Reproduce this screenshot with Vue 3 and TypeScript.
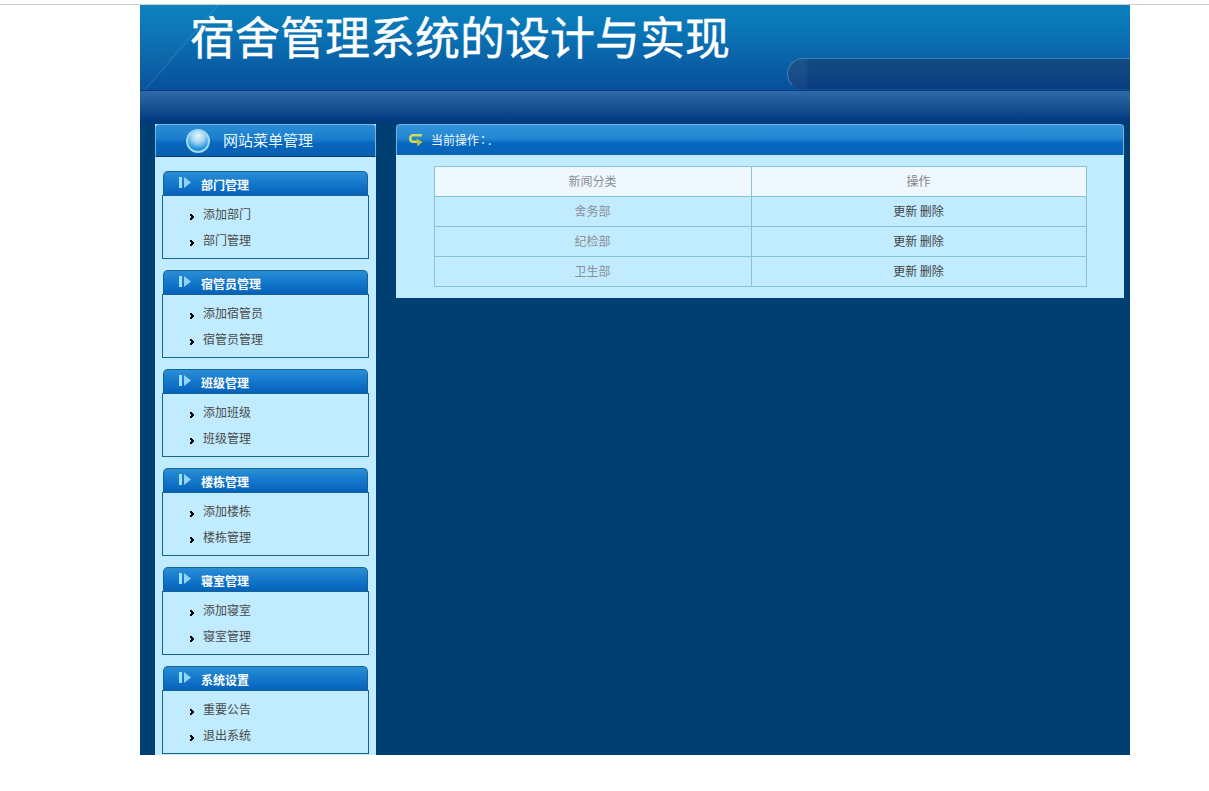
<script setup lang="ts">
interface Group { title: string; items: string[] }
const groups: Group[] = [
  { title: '部门管理', items: ['添加部门', '部门管理'] },
  { title: '宿管员管理', items: ['添加宿管员', '宿管员管理'] },
  { title: '班级管理', items: ['添加班级', '班级管理'] },
  { title: '楼栋管理', items: ['添加楼栋', '楼栋管理'] },
  { title: '寝室管理', items: ['添加寝室', '寝室管理'] },
  { title: '系统设置', items: ['重要公告', '退出系统'] },
]
const rows: string[] = ['舍务部', '纪检部', '卫生部']
</script>

<template>
  <div class="page">
    <div class="wrap">
      <header class="banner">
        <svg class="shine" width="90" height="85" viewBox="0 0 90 85">
          <path d="M0 0H78L5 85H0Z" fill="#fff" fill-opacity="0.018" />
          <path d="M78 0L5 85" stroke="#fff" stroke-opacity="0.09" stroke-width="1.5" fill="none" />
        </svg>
        <h1 class="title">宿舍管理系统的设计与实现</h1>
        <div class="pill"></div>
      </header>
      <div class="navbar"></div>
      <div class="content">
        <aside class="side">
          <div class="side-head">
            <span class="orb"></span>
            <span class="side-title">网站菜单管理</span>
          </div>
          <div class="side-body">
            <section v-for="g in groups" :key="g.title" class="group">
              <div class="group-head">
                <svg class="group-icon" width="12" height="11" viewBox="0 0 12 11">
                  <rect x="0" y="0" width="3" height="11" fill="#9fe0f5" />
                  <path d="M5 0 L12 5.5 L5 11 Z" fill="#8fd4f3" />
                </svg>
                <span class="group-title">{{ g.title }}</span>
              </div>
              <ul class="group-list">
                <li v-for="it in g.items" :key="it" class="item">
                  <svg class="bullet" width="5" height="6" viewBox="0 0 5 6">
                    <path d="M0 0h2v1h1v1h1v2H3v1H2v1H0V4h1V2H0Z" fill="#000" />
                  </svg>
                  <span>{{ it }}</span>
                </li>
              </ul>
            </section>
          </div>
        </aside>
        <main class="main">
          <div class="main-head">
            <svg class="back" width="14" height="14" viewBox="0 0 14 14">
              <path d="M13 2.2H4.5Q1.4 2.2 1.4 5V6Q1.4 8.8 4.5 8.8H9" fill="none" stroke="#d3dc55" stroke-width="2.6" />
              <path d="M7.5 5.5 L13.5 9 L8.5 13.5 Z" fill="#b4c544" />
            </svg>
            <span class="crumb">当前操作<span class="colon">：</span>.</span>
          </div>
          <div class="main-body">
            <table class="grid">
              <tbody>
                <tr class="head-row">
                  <td class="c1">新闻分类</td>
                  <td class="c2 op-head">操作</td>
                </tr>
                <tr v-for="r in rows" :key="r">
                  <td class="c1">{{ r }}</td>
                  <td class="c2 ops">更新 删除</td>
                </tr>
              </tbody>
            </table>
          </div>
        </main>
      </div>
    </div>
  </div>
</template>

<style>
html, body { margin: 0; background: #fff; }
</style>

<style scoped>
.page {
  padding-top: 4px;
  height: 787px;
  background: #fff;
  font-family: "Noto Sans CJK SC", "Liberation Sans", sans-serif;
  font-size: 12px;
}
.wrap {
  border-top: 1px solid #d2cdca;
  padding: 0 79px 0 140px;
  height: 786px;
  box-sizing: border-box;
}
.banner {
  position: relative;
  height: 85px;
  width: 990px;
  background: linear-gradient(180deg, #0a80bd 0%, #0a75b6 30%, #0a62a8 65%, #074f9c 100%);
}
.shine {
  position: absolute;
  left: 0;
  top: 0;
}
.title {
  position: absolute;
  left: 50px;
  top: 1px;
  margin: 0;
  font-size: 45px;
  line-height: 60px;
  font-weight: 400;
  color: #fff;
  white-space: nowrap;
  -webkit-text-stroke: 0.4px #fff;
}
.pill {
  position: absolute;
  right: 0;
  top: 53px;
  width: 343px;
  height: 32px;
  box-sizing: border-box;
  border: 1px solid #3f7fc0;
  border-right: 0;
  border-bottom-color: #0e4f98;
  border-radius: 16px 0 0 16px;
  background:
    linear-gradient(90deg, rgba(255, 255, 255, 0.05) 0, rgba(255, 255, 255, 0.05) 16px, transparent 22px),
    linear-gradient(180deg, #124a80 0%, #0e4583 50%, #083a80 100%);
}
.navbar {
  width: 990px;
  height: 34px;
  box-sizing: border-box;
  border-top: 1px solid #0c3a80;
  background: linear-gradient(180deg, #2e6ca8 0%, #1c5595 40%, #033a80 90%, #003a78 100%);
}
.content {
  width: 990px;
  height: 631px;
  overflow: hidden;
  background: #003f72;
  display: flex;
  padding-left: 15px;
  box-sizing: border-box;
  column-gap: 20px;
}
.side {
  width: 221px;
  flex: none;
  height: 631px;
  background: #c1ecff;
  overflow: hidden;
}
.side-head {
  height: 33px;
  box-sizing: border-box;
  border: 1px solid #6fb4e2;
  border-bottom: 1px solid #0b3a70;
  border-radius: 4px 4px 0 0;
  background: linear-gradient(180deg, #2a8ed6 0%, #1b7ccb 45%, #0666bd 60%, #0a5fb0 100%);
  display: flex;
  align-items: center;
  padding-left: 30px;
}
.orb {
  width: 24px;
  height: 24px;
  border-radius: 50%;
  box-sizing: border-box;
  border: 2px solid #9fd8f2;
  background: radial-gradient(circle at 50% 25%, #e8f6fd 0%, #a6d8f2 35%, #2a97dc 70%, #0a6cc0 100%);
}
.side-title {
  margin-left: 13px;
  margin-top: -2px;
  font-size: 15px;
  line-height: 20px;
  color: #e8f7ff;
}
.side-body {
  padding: 14px 7px 0 7px;
  display: flex;
  flex-direction: column;
  gap: 11px;
}
.group {
  width: 207px;
}
.group-head {
  height: 24px;
  margin: 0 1px;
  box-sizing: border-box;
  border: 1px solid #14648f;
  border-bottom: 0;
  border-radius: 5px 5px 0 0;
  background: linear-gradient(180deg, #2a8ed6 0%, #1478cb 50%, #0561bb 100%);
  display: flex;
  align-items: center;
  padding-left: 15px;
}
.group-icon {
  margin-top: -2px;
}
.group-title {
  margin-left: 10px;
  margin-top: 2px;
  color: #fff;
  font-weight: 700;
  font-size: 12px;
  line-height: 16px;
}
.group-list {
  list-style: none;
  margin: 0;
  padding: 5px 0 5px 27px;
  height: 64px;
  box-sizing: border-box;
  border: 1px solid #14648f;
  background: #c1ecff;
}
.item {
  height: 26px;
  display: flex;
  align-items: center;
  color: #4a4a4a;
  line-height: 26px;
}
.bullet {
  margin-top: 6px;
  margin-right: 8px;
}
.main {
  width: 728px;
  flex: none;
}
.main-head {
  height: 31px;
  box-sizing: border-box;
  border: 1px solid #6fb4e2;
  border-bottom: 0;
  border-radius: 4px 4px 0 0;
  background: linear-gradient(180deg, #2f93d8 0%, #2486d2 45%, #0668c2 60%, #0a62b6 100%);
  display: flex;
  align-items: center;
  padding-left: 12px;
}
.crumb {
  margin-left: 8px;
  margin-top: -2px;
  color: #f0f8ff;
  font-size: 12px;
}
.colon {
  font-family: "Noto Sans CJK TC", sans-serif;
  display: inline-block;
  width: 9px;
  text-indent: -2px;
}
.main-body {
  background: #c1ecff;
  height: 143px;
  padding: 11px 37px 0 38px;
  box-sizing: border-box;
}
.grid {
  width: 653px;
  table-layout: fixed;
  border-collapse: collapse;
  border: 1px solid #86c4da;
}
.grid td {
  height: 29px;
  padding: 0 1px 2px 0;
  box-sizing: border-box;
  border: 1px solid #86c4da;
  text-align: center;
  font-size: 12px;
  line-height: 16px;
}
.grid tr {
  height: 30px;
}
.c1 {
  width: 317px;
  color: #8a8f96;
}
.head-row td {
  background: #eff7ff;
}
.op-head {
  color: #8a7f86;
}
.ops {
  color: #444;
}
</style>
